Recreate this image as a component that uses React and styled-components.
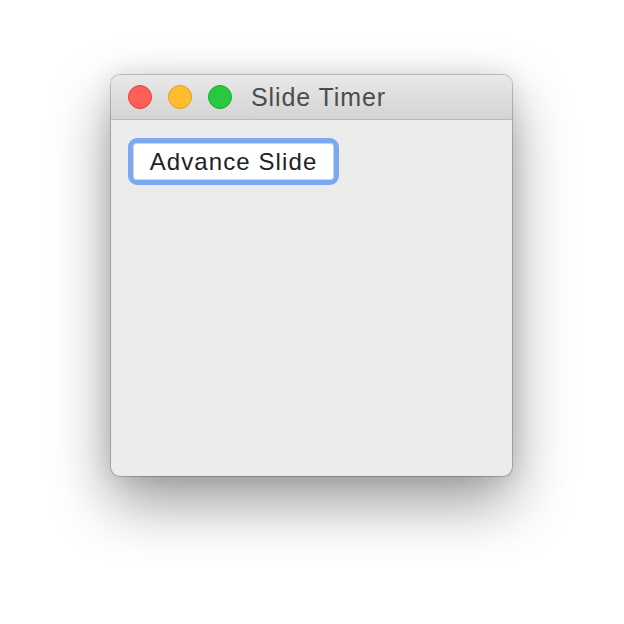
import React from "react";
import styled, { createGlobalStyle } from "styled-components";

const GlobalStyle = createGlobalStyle`
  html, body {
    margin: 0;
    padding: 0;
    background: #ffffff;
  }
  body {
    font-family: "Liberation Sans", Arial, sans-serif;
  }
`;

const Desktop = styled.div`
  width: 624px;
  height: 624px;
  padding: 75px 0 0 111px;
  box-sizing: border-box;
`;

const Window = styled.div`
  width: 401px;
  height: 401px;
  border-radius: 9px;
  overflow: hidden;
  display: flex;
  flex-direction: column;
  background: #ececec;
  box-shadow: 0 0 0 1px rgba(0, 0, 0, 0.2), 0 26px 60px rgba(0, 0, 0, 0.4),
    0 0 24px rgba(0, 0, 0, 0.1);
`;

const TitleBar = styled.div`
  height: 44px;
  flex-shrink: 0;
  display: flex;
  align-items: center;
  padding-left: 17px;
  gap: 16px;
  background: linear-gradient(#e9e9e9, #d4d4d4);
  border-bottom: 1px solid #b9b9b9;
`;

const Light = styled.span`
  width: 24px;
  height: 24px;
  border-radius: 50%;
  box-sizing: border-box;
  background: ${(p) => p.$fill};
  border: 1px solid ${(p) => p.$edge};
`;

const Title = styled.div`
  margin-left: 3px;
  font-size: 25px;
  letter-spacing: 0.9px;
  color: #4c4c4c;
`;

const Content = styled.div`
  flex: 1;
  padding: 18px 0 0 17px;
`;

const Button = styled.button`
  box-sizing: border-box;
  height: 47px;
  width: 211px;
  padding: 0;
  border-radius: 9px;
  border: 5px solid #7ba8ee;
  background: #ffffff;
  box-shadow: inset 0 0 0 1px #c5d7f2;
  font-family: "Liberation Sans", Arial, sans-serif;
  font-size: 24px;
  letter-spacing: 1.1px;
  color: #222222;
`;

export default function App() {
  return (
    <>
      <GlobalStyle />
      <Desktop>
        <Window>
          <TitleBar>
            <Light $fill="#fe5f57" $edge="#e0443e" />
            <Light $fill="#febc2e" $edge="#dea123" />
            <Light $fill="#28c840" $edge="#1aab29" />
            <Title>Slide Timer</Title>
          </TitleBar>
          <Content>
            <Button>Advance Slide</Button>
          </Content>
        </Window>
      </Desktop>
    </>
  );
}
